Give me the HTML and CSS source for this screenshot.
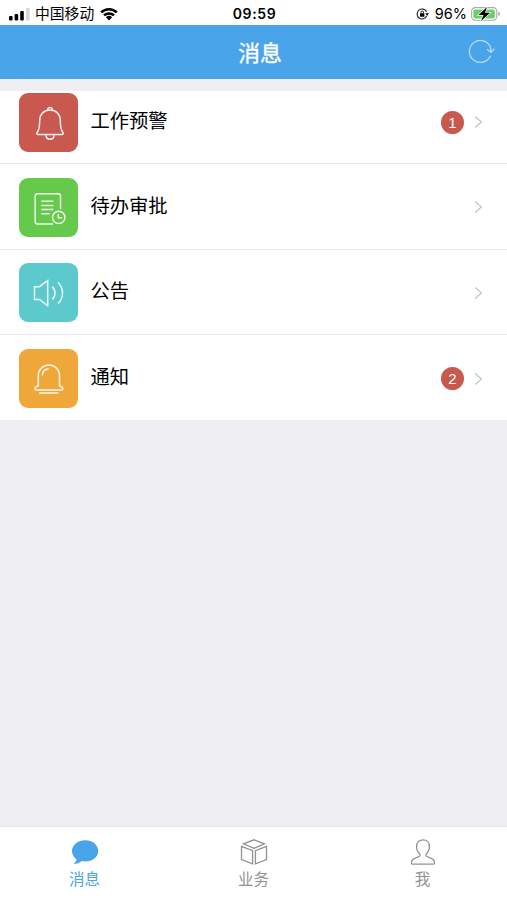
FILE: index.html
```html
<!DOCTYPE html>
<html lang="zh-CN">
<head>
    <meta charset="UTF-8">
    <meta name="viewport" content="width=device-width, initial-scale=1.0">
    <title>消息</title>
    <link rel="stylesheet" href="styles.css">
</head>
<body>
    <!-- Status bar -->
    <div class="status-bar">
        <div class="status-left">
            <svg class="signal" width="21" height="14" viewBox="0 0 21 14">
                <rect x="0" y="9" width="3.6" height="4.5" rx="1"/>
                <rect x="5.6" y="7" width="3.6" height="6.5" rx="1"/>
                <rect x="11.2" y="4" width="3.6" height="9.5" rx="1"/>
                <rect x="17" y="1" width="3.6" height="12.5" rx="1" fill="#d8d8d8"/>
            </svg>
            <span class="carrier">中国移动</span>
            <svg class="wifi" width="18" height="14" viewBox="0 0 18 14">
                <path d="M1.2 5.3a11.2 11.2 0 0 1 15.6 0M4 8.4a7.2 7.2 0 0 1 10 0" fill="none" stroke="#000" stroke-width="2.5"/>
                <path d="M5.9 10.3a4.5 4.5 0 0 1 6.2 0L9 13.4z"/>
            </svg>
        </div>
        <span class="time">09:59</span>
        <div class="status-right">
            <svg width="13" height="12" viewBox="0 0 13 12">
                <path d="M10.6 3.8A5 5 0 1 0 10.7 8" fill="none" stroke="#222" stroke-width="1.1"/>
                <path d="M9.3 5.2h3.6L11.1 7.9z"/>
                <rect x="4" y="5.3" width="4.4" height="3.4" rx=".4"/>
                <path d="M4.9 5.5V4.4a1.3 1.3 0 0 1 2.6 0v1.1" fill="none" stroke="#000" stroke-width=".9"/>
            </svg>
            <span class="percent">96%</span>
            <svg class="battery" width="30" height="16" viewBox="0 0 30 16">
                <rect x=".6" y="1.6" width="25.2" height="12.6" rx="3.6" fill="#fff" stroke="#aaa" stroke-width="1.1"/>
                <rect x="2.4" y="3.4" width="21.4" height="9" rx="2" fill="#68cf6b"/>
                <path d="M27.3 5.5v4.6q1.7-.6 1.7-2.3t-1.7-2.3z" fill="#aaa"/>
                <path d="M16 1 7.500 9h4.900l-2.300 6L19 6.800h-5z" stroke="#fff" stroke-width="1.400" paint-order="stroke"/>
            </svg>
        </div>
    </div>

    <!-- Title bar -->
    <header class="header">
        <h1>消息</h1>
        <svg class="refresh" width="27" height="25" viewBox="0 0 27 25">
            <path d="M22.600 8.300A11 11 0 1 0 22.500 16.800"/>
            <path d="M19.200 10.200l3.800 3.200 3.400-3.800M23 13.200q.2-2.400-.6-5"/>
        </svg>
    </header>

    <!-- Message list -->
    <ul class="list">
        <li class="item">
            <svg class="tile red" viewBox="0 0 59 59">
                <path d="M28.600 17.600a2.500 2.500 0 1 1 4.800 0M31 17c-6.300 0-10.300 4.300-10.300 10.500 0 6.200-.2 9.100-2.600 11.900-.8 1-.4 2 .8 2h24.200c1.200 0 1.600-1 .8-2-2.400-2.800-2.600-5.700-2.600-11.900C41.300 21.300 37.300 17 31 17zM27 42.400c.5 5.200 7.500 5.200 8 0"/>
            </svg>
            <span class="label">工作预警</span>
            <span class="badge">1</span>
            <svg class="arrow" viewBox="0 0 9 14"><path d="M1.200 1.500 7.300 7l-6.100 5.500"/></svg>
        </li>
        <li class="item">
            <svg class="tile green" viewBox="0 0 59 59">
                <path d="M34 46H18.500q-2.300 0-2.300-2.300V18q0-2.300 2.300-2.300h20.700q2.300 0 2.300 2.300v13M22.300 23.300h12M22.300 27.400h12M22.300 31.500h12M22.300 35.700h8.500"/>
                <circle cx="39.700" cy="39.400" r="6.200"/>
                <path d="M39.300 35.800v4h4"/>
            </svg>
            <span class="label">待办审批</span>
            <svg class="arrow" viewBox="0 0 9 14"><path d="M1.200 1.500 7.300 7l-6.100 5.500"/></svg>
        </li>
        <li class="item">
            <svg class="tile teal" viewBox="0 0 59 59">
                <path d="M15.500 23.700h5l8.200-6.200v25.300l-8.200-6.400h-5zM33.200 23.800c3.700 3.300 3.700 9.400 0 12.700M38.800 19.300c6.300 5.700 6.300 15.800 0 21.500"/>
            </svg>
            <span class="label">公告</span>
            <svg class="arrow" viewBox="0 0 9 14"><path d="M1.200 1.500 7.300 7l-6.100 5.500"/></svg>
        </li>
        <li class="item">
            <svg class="tile orange" viewBox="0 0 59 59">
                <path d="M19.300 36.800V26.500a10.600 10.600 0 0 1 21.200 0v10.300c.8.400 3.300 1 3.300 2.700 0 1-.7 1.600-1.800 1.600H17.600c-1.100 0-1.800-.6-1.800-1.600 0-1.700 2.700-2.300 3.500-2.700zM23.300 26.300c.2-3.700 2.500-6 6.200-6.500M20.300 43.900h19.200"/>
            </svg>
            <span class="label">通知</span>
            <span class="badge">2</span>
            <svg class="arrow" viewBox="0 0 9 14"><path d="M1.200 1.500 7.300 7l-6.100 5.500"/></svg>
        </li>
    </ul>

    <!-- Bottom tabs -->
    <nav class="tabs">
        <a class="tab active">
            <svg width="28" height="28" viewBox="0 0 28 28">
                <path d="M14.300 1.300C21.500 1.300 27.200 5.900 27.200 12S21.500 22.400 14.300 22.400c-1.300 0-2.400-.1-3.500-.4-2.200 2-5.200 3.100-8.600 3 1.900-1.200 3-2.700 3.300-4.600C2.800 18.500 1 15.500 1 12 1 5.900 7 1.300 14.300 1.300z" fill="#49a4ea"/>
            </svg>
            <span>消息</span>
        </a>
        <a class="tab">
            <svg class="line-icon" width="28" height="28" viewBox="0 0 28 28">
                <path d="M14 .8 24.500 4.800 14 9.300 3.500 4.800zM1.500 7.300 12.600 11.600V24.800L1.500 20.500zM26.500 7.300 15.400 11.600V24.800l11.100-4.300z"/>
            </svg>
            <span>业务</span>
        </a>
        <a class="tab">
            <svg class="line-icon" width="28" height="28" viewBox="0 0 28 28">
                <path d="M14 .8c-4 0-6.400 2.700-6.400 6.600 0 3.200 1.200 5.700 3.300 7.500.7 1.700-.3 2.600-2.200 3.300-4 1.400-6.200 2.300-6.200 5v.8q0 1.200 1.200 1.200h20.600q1.200 0 1.200-1.200v-.8c0-2.700-2.200-3.600-6.200-5-1.900-.7-2.900-1.600-2.200-3.300 2.100-1.800 3.300-4.300 3.300-7.500 0-3.900-2.400-6.600-6.400-6.600z"/>
            </svg>
            <span>我</span>
        </a>
    </nav>
</body>
</html>
```
FILE: styles.css
```css
/* Basic Reset */
* {
    margin: 0;
    padding: 0;
    box-sizing: border-box;
}

body {
    display: flex;
    flex-direction: column;
    height: 900px;
    font-family: "Inter", "Noto Sans CJK SC", sans-serif;
    background-color: #eeeef3;
    color: #000;
}

svg {
    display: block;
    flex: none;
}

/* Status bar */
.status-bar {
    display: grid;
    grid-template-columns: 1fr auto 1fr;
    align-items: center;
    height: 25px;
    padding: 2px 6px 0 9px;
    background-color: #fff;
    line-height: 20px;
}

.status-left,
.status-right {
    display: flex;
    align-items: center;
}

.status-right {
    justify-content: flex-end;
}

.carrier {
    margin: 0 6px 0 5px;
    font-size: 14.8px;
}

.time {
    margin-right: 1px;
    font-size: 14px;
    font-weight: 600;
    letter-spacing: 0.6px;
}

.percent {
    margin: 0 4px 0 6px;
    font-size: 14.5px;
}

/* Title bar */
.header {
    display: grid;
    grid-template-columns: 1fr auto 1fr;
    align-items: center;
    height: 54px;
    background-color: #49a4ea;
    color: #fff;
}

.header h1 {
    grid-column: 2;
    margin: 2px 0 0 13px;
    font-size: 21.8px;
    font-weight: 400;
    line-height: 32px;
    -webkit-text-stroke: 0.4px #fff;
}

.refresh {
    justify-self: end;
    margin: 0 12px 2px 0;
    fill: none;
    stroke: #b9ddf8;
    stroke-width: 1.2;
}

/* Message list */
.list {
    margin-top: 12px;
    background-color: #fff;
    list-style: none;
}

.item {
    display: flex;
    align-items: center;
    height: 85.5px;
    padding: 2px 24px 0 19px;
    border-bottom: 1.5px solid #e9e9ec;
}

.item:first-child {
    height: 73px;
    padding: 0 24px 10px 19px;
}

.item:last-child {
    height: 85px;
    border-bottom: none;
}

.tile {
    width: 59px;
    height: 59px;
    border-radius: 9px;
    fill: none;
    stroke: #fff;
    stroke-width: 1.5;
    stroke-opacity: 0.9;
}

.red {
    background-color: #c9584f;
}

.green {
    background-color: #65c94b;
}

.teal {
    background-color: #5cc9cd;
}

.orange {
    background-color: #f0a73a;
}

.label {
    flex: 1;
    margin: 0 0 3px 12.5px;
    font-size: 19.3px;
    line-height: 28px;
}

.badge {
    width: 23px;
    height: 23px;
    margin-right: 10px;
    border-radius: 50%;
    background-color: #c9584f;
    color: #fff;
    font-family: "Liberation Sans", sans-serif;
    font-size: 15px;
    line-height: 23px;
    text-align: center;
}

.arrow {
    width: 9px;
    height: 14px;
    fill: none;
    stroke: #c4c4c8;
    stroke-width: 1.3;
}

/* Bottom tabs */
.tabs {
    display: flex;
    height: 74px;
    margin-top: auto;
    padding-top: 12px;
    border-top: 1px solid #e6e6ea;
    background-color: #fff;
}

.tab {
    display: flex;
    flex: 1;
    flex-direction: column;
    align-items: center;
    color: #929292;
    font-size: 15.5px;
    line-height: 26px;
}

.active {
    color: #49a4ea;
}

.line-icon {
    fill: none;
    stroke: #929292;
    stroke-width: 1.3;
}
```
